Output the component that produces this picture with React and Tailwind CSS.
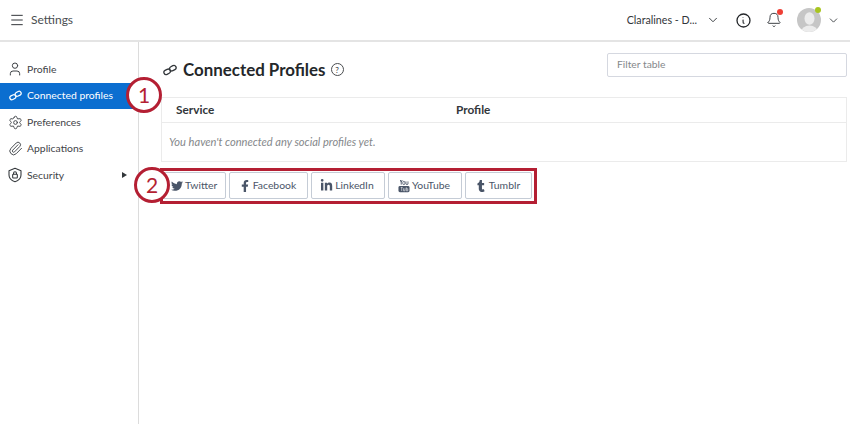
import React from "react";
import { Menu, ChevronDown, Bell, User, Settings, Paperclip } from "lucide-react";
import { FaTwitter, FaFacebookF, FaLinkedinIn, FaTumblr } from "react-icons/fa";

const YouTubeIcon = () => (
  <svg width="12" height="14" viewBox="0 0 13 14" fill="#4a5568">
    <path d="M2.5 0.5 L3.5 3 L4.5 0.5 M3.5 3 V5.5" stroke="#4a5568" strokeWidth="1" fill="none" />
    <rect x="5.2" y="2" width="2.2" height="3.5" rx="1" stroke="#4a5568" strokeWidth="0.9" fill="none" />
    <path d="M8.6 2 V5 Q9.6 6 10.8 5 V2" stroke="#4a5568" strokeWidth="0.9" fill="none" />
    <rect x="0.5" y="7" width="12" height="6.8" rx="1.6" />
    <path d="M3 8.6 H5 M4 8.6 V12.4 M6 9.5 V12.2 H7.6 V9.5 M9 8.4 V12.2 H10.6 V10 H9" stroke="#fff" strokeWidth="0.6" fill="none" />
  </svg>
);

const ShieldLock = () => (
  <svg width="16" height="16" viewBox="0 0 24 24" fill="none" stroke="#32363a" strokeWidth="1.6" strokeLinejoin="round">
    <path d="M12 2 L21 5.5 V12 C21 17 17 20.5 12 22 C7 20.5 3 17 3 12 V5.5 Z" />
    <rect x="8.5" y="11" width="7" height="5.5" rx="1" />
    <path d="M9.8 11 V9.2 A2.2 2.2 0 0 1 14.2 9.2 V11" />
  </svg>
);

const ChainIcon = ({ size = 16, className = "" }) => (
  <svg width={size} height={size} viewBox="0 0 16 16" fill="none" stroke="currentColor" strokeWidth="1.5" className={className}>
    <rect x="0.9" y="7.6" width="7.6" height="5" rx="2.5" transform="rotate(-28 4.7 10.1)" />
    <rect x="7.5" y="3.4" width="7.6" height="5" rx="2.5" transform="rotate(-28 11.3 5.9)" />
  </svg>
);

const ClockInfo = () => (
  <svg width="15" height="15" viewBox="0 0 15 15" fill="none" stroke="#24272a" strokeWidth="1.3">
    <circle cx="7.5" cy="7.5" r="6.5" />
    <path d="M7 4.2 L7 4.8 M7 6.6 L7.2 10 L8.4 10.6" strokeWidth="1.1" />
  </svg>
);

const Avatar = () => (
  <svg width="24" height="24" viewBox="0 0 24 24">
    <defs>
      <clipPath id="av"><circle cx="12" cy="12" r="12" /></clipPath>
    </defs>
    <g clipPath="url(#av)">
      <rect width="24" height="24" fill="#c6c6c6" />
      <ellipse cx="12.5" cy="10.5" rx="5" ry="6.2" fill="#ececec" />
      <ellipse cx="12.5" cy="24" rx="8.5" ry="6.5" fill="#ececec" />
    </g>
  </svg>
);

const nav = [
  { label: "Profile", icon: <User size={16} strokeWidth={1.5} /> },
  { label: "Connected profiles", icon: <ChainIcon size={13} />, active: true },
  { label: "Preferences", icon: <Settings size={15} strokeWidth={1.5} /> },
  { label: "Applications", icon: <Paperclip size={15} strokeWidth={1.5} /> },
  { label: "Security", icon: <ShieldLock />, arrow: true },
];

const buttons = [
  { label: "Twitter", icon: <FaTwitter size={12} />, w: "w-[66px] pl-[10px]" },
  { label: "Facebook", icon: <FaFacebookF size={12} />, w: "w-[79px] justify-center pr-[2px]" },
  { label: "LinkedIn", icon: <FaLinkedinIn size={13} />, w: "w-[74px] justify-center pr-[2px]" },
  { label: "YouTube", icon: <YouTubeIcon />, w: "w-[74px] justify-center pr-[2px]" },
  { label: "Tumblr", icon: <FaTumblr size={12} />, w: "w-[67px] justify-center pr-[2px]" },
];

const Marker = ({ n, className }) => (
  <div className={`absolute w-[36px] h-[36px] rounded-full bg-white border-[3px] border-[#b41f33] flex items-center justify-center text-[21px] text-[#b41f33] ${className}`}>
    {n}
  </div>
);

export default function App() {
  return (
    <div className="relative w-[850px] h-[424px] overflow-hidden bg-white text-[#32363a] font-['Lato','Noto_Sans',sans-serif]">
      <header className="h-[42px] border-b-2 border-[#e4e4e4] flex items-center pl-[9px] pr-[10px]">
        <Menu size={16} strokeWidth={1.5} />
        <span className="ml-[6px] text-[12px] text-[#4a4d50]">Settings</span>
        <div className="ml-auto flex items-center">
          <span className="text-[10.7px] text-[#32363a]">Claralines - D...</span>
          <ChevronDown size={14} strokeWidth={1.6} className="ml-[9px]" />
          <div className="ml-[16px]"><ClockInfo /></div>
          <div className="relative ml-[15px]">
            <Bell size={16} strokeWidth={1.4} />
            <span className="absolute -top-[3px] -right-[1px] w-[6px] h-[6px] rounded-full bg-[#ee3f35]" />
          </div>
          <div className="relative ml-[15px]">
            <Avatar />
            <span className="absolute -top-[1px] right-0 w-[6px] h-[6px] rounded-full bg-[#a8c520]" />
          </div>
          <ChevronDown size={13} strokeWidth={1.6} className="ml-[6px]" />
        </div>
      </header>

      <div className="flex h-[382px]">
        <aside className="w-[139px] shrink-0 border-r border-[#dcdcdc] pt-[14px]">
          {nav.map((n) => (
            <div
              key={n.label}
              className={`h-[26.5px] flex items-center pl-[7px] pr-[11px] text-[10.4px] whitespace-nowrap ${n.active ? "bg-[#0b6ed0] text-white" : "text-[#3f4347]"}`}
            >
              <span className="w-[16px] mr-[4px] flex justify-center">{n.icon}</span>
              <span className="pt-[1px]">{n.label}</span>
              {n.arrow && <span className="ml-auto w-0 h-0 border-y-[3.5px] border-y-transparent border-l-[5px] border-l-[#32363a]" />}
            </div>
          ))}
        </aside>

        <main className="flex-1 pl-[24px] pr-[3px] pt-[11px]">
          <div className="flex items-start justify-between h-[44px]">
            <div className="flex items-center pt-[4px]">
              <ChainIcon size={14} />
              <h1 className="ml-[6px] text-[16.9px] font-bold text-[#24272a]">Connected Profiles</h1>
              <span className="ml-[5px] w-[13px] h-[13px] rounded-full border border-[#4a4d50] flex items-center justify-center text-[8px] leading-none">?</span>
            </div>
            <div className="w-[240px] h-[24px] border border-[#d5d8e0] rounded-[2px] flex items-center px-[9px] text-[10.3px] text-[#85888b]">Filter table</div>
          </div>
          <div className="-ml-[2px] border border-[#ebebeb]">
            <div className="h-[25px] border-b border-[#ebebeb] flex items-center pl-[14px] text-[11.8px] font-bold text-[#32363a]">
              <span className="w-[280px]">Service</span>
              <span>Profile</span>
            </div>
            <div className="h-[38px] flex items-center pl-[7px] text-[11.1px] italic text-[#85888b]">You haven't connected any social profiles yet.</div>
          </div>
          <div className="flex gap-[3px] mt-[10px] -ml-[3px]">
            {buttons.map((b) => (
              <div key={b.label} className={`${b.w} h-[27px] border border-[#c5ccd6] rounded-[2px] flex items-center gap-[2px] text-[10.4px] text-[#4a5568]`}>
                {b.icon}
                <span>{b.label}</span>
              </div>
            ))}
          </div>
        </main>
      </div>

      <div className="absolute left-[160px] top-[168px] w-[377px] h-[36px] border-[3px] border-[#b41f33]" />
      <Marker n="1" className="left-[126px] top-[77px]" />
      <Marker n="2" className="left-[134px] top-[167px]" />
    </div>
  );
}
